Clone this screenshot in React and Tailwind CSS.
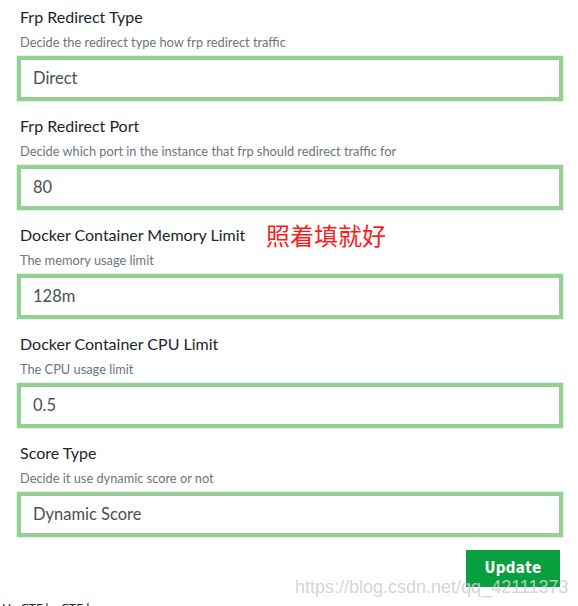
import React from "react";

const fields = [
  { label: "Frp Redirect Type", desc: "Decide the redirect type how frp redirect traffic", value: "Direct" },
  { label: "Frp Redirect Port", desc: "Decide which port in the instance that frp should redirect traffic for", value: "80" },
  { label: "Docker Container Memory Limit", desc: "The memory usage limit", value: "128m", note: "照着填就好" },
  { label: "Docker Container CPU Limit", desc: "The CPU usage limit", value: "0.5" },
  { label: "Score Type", desc: "Decide it use dynamic score or not", value: "Dynamic Score" },
];

const App = () => {
  return (
    <div className="relative w-[578px] h-[606px] overflow-hidden bg-white font-['Lato','Liberation_Sans',sans-serif]">
      <div className="flex flex-col pl-[17px] pr-[17px] pt-[6px]">
        {fields.map((f) => (
          <div key={f.label} className="relative flex flex-col mb-[14px]">
            <label className="pl-[3px] text-[16px] leading-[22px] text-[#212529]">{f.label}</label>
            {f.note && (
              <span className="absolute left-[249px] top-[-4px] text-[24px] leading-[30px] text-[#ff1a1a] font-['Noto_Sans_CJK_SC',sans-serif]">
                {f.note}
              </span>
            )}
            <p className="pl-[3px] mt-[5px] text-[12.8px] leading-[18px] text-[#6c757d]">{f.desc}</p>
            <div className="mt-[5px] h-[45px] w-[546px] border-4 border-[#94d094] shadow-[0_0_0_1px_#e3f3e3] flex items-center pl-[12px] text-[16.5px] text-[#495057]">
              {f.value}
            </div>
          </div>
        ))}
        <div className="flex justify-end mt-[-2px]">
          <button className="mr-[1px] mt-[1px] w-[94px] h-[37px] bg-[#08a03f] text-white font-bold text-[15px] tracking-wide font-['DejaVu_Sans_Condensed','Liberation_Sans',sans-serif]">
            Update
          </button>
        </div>
      </div>
      <p className="mt-[12px] pl-[2px] text-[12px] leading-[18px] text-[#212529]">Hu CTF by CTFd</p>
      <span className="absolute left-[295px] top-[575px] text-[18px] leading-[24px] text-[#cfcfcf]/90 font-['Liberation_Sans',sans-serif]">
        https://blog.csdn.net/qq_42111373
      </span>
    </div>
  );
};

export default App;
